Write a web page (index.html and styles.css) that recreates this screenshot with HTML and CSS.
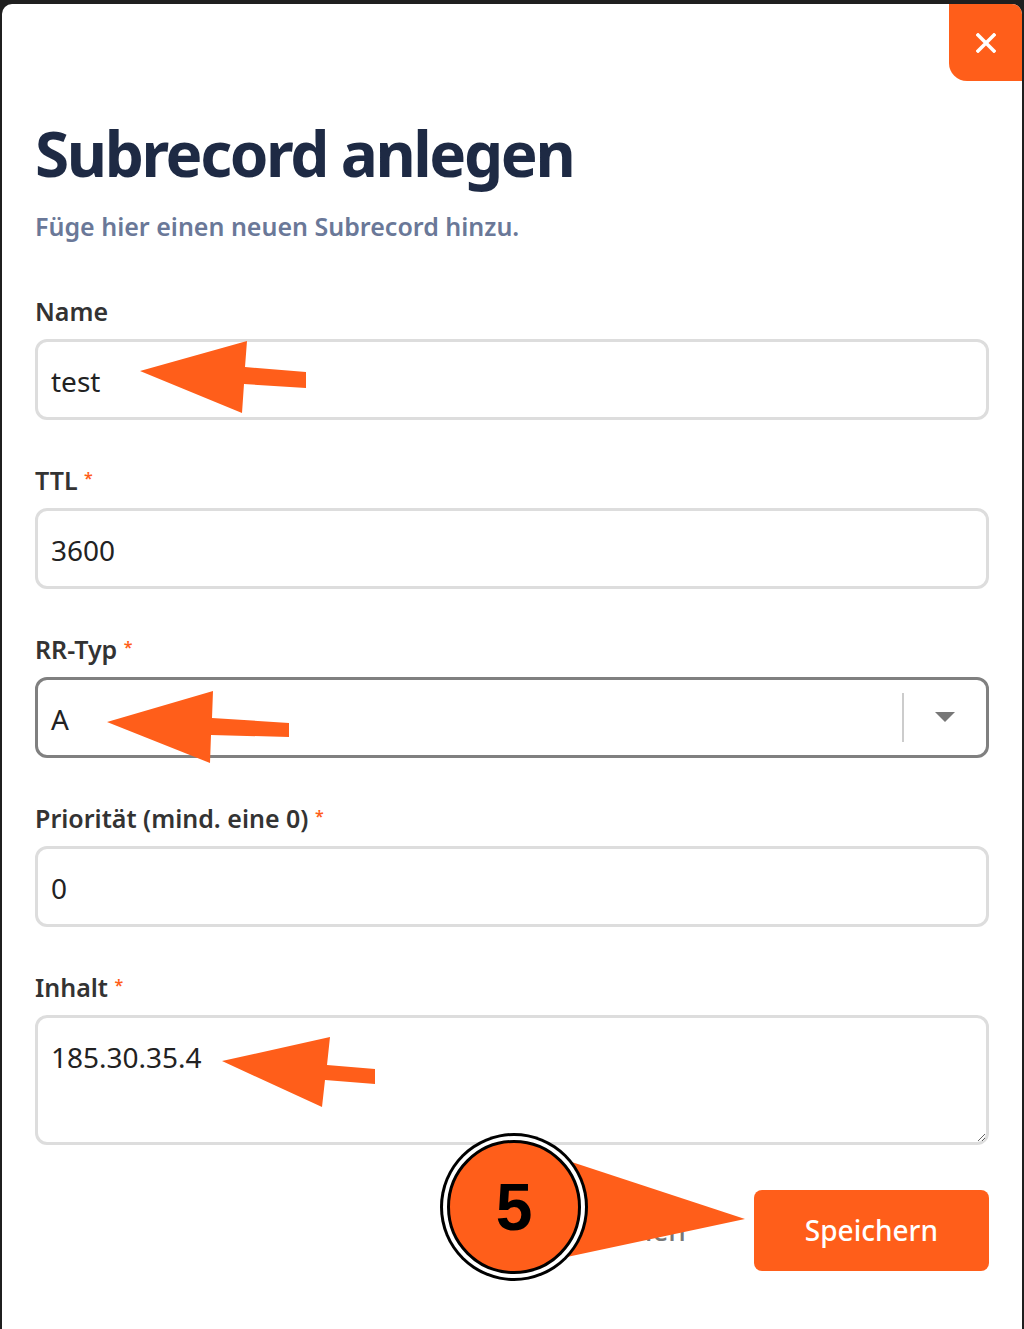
FILE: index.html
```html
<!DOCTYPE html>
<html lang="de">
<head>
    <meta charset="UTF-8">
    <meta name="viewport" content="width=device-width, initial-scale=1.0">
    <title>Subrecord anlegen</title>
    <link rel="stylesheet" href="styles.css">
</head>
<body>
    <div class="modal">
        <button class="close-button" type="button" aria-label="Schließen">
            <svg width="20" height="20" viewBox="0 0 20 20">
                <path d="M2 2 L18 18 M18 2 L2 18" stroke="#fff" stroke-width="3.5" stroke-linecap="square"/>
            </svg>
        </button>

        <h1 class="modal-title">Subrecord anlegen</h1>
        <p class="modal-subtitle">Füge hier einen neuen Subrecord hinzu.</p>

        <form class="record-form">
            <div class="field">
                <label for="name">Name</label>
                <input id="name" type="text" value="test">
            </div>
            <div class="field">
                <label for="ttl">TTL <span class="required">*</span></label>
                <input id="ttl" type="text" value="3600">
            </div>
            <div class="field">
                <label>RR-Typ <span class="required">*</span></label>
                <div class="select-box">
                    <span class="select-value">A</span>
                    <span class="select-divider"></span>
                    <span class="select-indicator"><span class="select-caret"></span></span>
                </div>
            </div>
            <div class="field">
                <label for="prio">Priorität (mind. eine 0) <span class="required">*</span></label>
                <input id="prio" type="text" value="0">
            </div>
            <div class="field">
                <label for="content">Inhalt <span class="required">*</span></label>
                <textarea id="content">185.30.35.4</textarea>
            </div>
            <div class="form-actions">
                <button type="button" class="cancel-button">Abbrechen</button>
                <button type="submit" class="save-button">Speichern</button>
            </div>
        </form>
    </div>

    <!-- Markierungen aus der Anleitung -->
    <svg class="annotations" width="1024" height="1329" viewBox="0 0 1024 1329">
        <polygon points="140,371 247,341 245,367 306,372 306,388 244,384 242,413" />
        <polygon points="107,722 213,691 212,718 289,723 289,737 211,735 210,763" />
        <polygon points="222,1061 330,1037 327,1065 375,1069 375,1084 325,1080 322,1107" />
        <polygon points="520,1145 745,1219 520,1267" />
    </svg>
    <div class="step-badge">5</div>
</body>
</html>
```

FILE: styles.css
```css
body {
    margin: 0;
    background: #1f1f1f;
    font-family: "Noto Sans", sans-serif;
    color: #333;
}

.modal {
    position: relative;
    margin: 4px 2px 0 2px;
    min-height: 1325px;
    box-sizing: border-box;
    padding: 112px 33px 0;
    background: #fff;
    border-radius: 10px 10px 0 0;
}

.close-button {
    position: absolute;
    top: 0;
    right: 0;
    width: 73px;
    height: 77px;
    border: none;
    padding: 0;
    background: #ff5e1a;
    border-radius: 0 10px 0 18px;
    display: flex;
    align-items: center;
    justify-content: center;
    cursor: pointer;
}

.modal-title {
    margin: 0;
    font-size: 62px;
    line-height: 1.2;
    font-weight: 700;
    letter-spacing: -2.4px;
    color: #1e2a44;
}

.modal-subtitle {
    margin: 20px 0 0;
    font-size: 25px;
    line-height: 1.3;
    font-weight: 600;
    color: #6a7898;
}

.record-form {
    margin-top: 53px;
    display: flex;
    flex-direction: column;
    gap: 45px;
}

.field {
    display: flex;
    flex-direction: column;
    gap: 13px;
}

.field label {
    font-size: 25px;
    line-height: 30px;
    font-weight: 600;
    color: #333;
}

.required {
    color: #ff5e1a;
    font-size: 16px;
    vertical-align: top;
    line-height: 26px;
}

.field input,
.field textarea,
.select-box {
    box-sizing: border-box;
    width: 100%;
    border: 3px solid #ddd;
    border-radius: 12px;
    font-family: "Noto Sans", sans-serif;
    font-size: 28px;
    color: #222;
    background: #fff;
}

.field input {
    height: 81px;
    padding: 4px 13px 0;
}

.field textarea {
    height: 130px;
    padding: 20px 13px;
    line-height: 1.4;
    resize: vertical;
}

.select-box {
    height: 81px;
    display: flex;
    align-items: center;
    padding: 4px 0 0 13px;
    border-color: #808080;
}

.select-value {
    flex: 1;
}

.select-divider {
    width: 2px;
    height: 49px;
    margin-top: -4px;
    background: #ccc;
}

.select-indicator {
    width: 82px;
    margin-top: -4px;
    display: flex;
    justify-content: center;
}

.select-caret {
    width: 0;
    height: 0;
    border-left: 10px solid transparent;
    border-right: 10px solid transparent;
    border-top: 10px solid #777;
}

.form-actions {
    display: flex;
    justify-content: flex-end;
    gap: 17px;
}

.form-actions button {
    height: 81px;
    padding: 0 51px;
    border: none;
    border-radius: 8px;
    font-family: "Noto Sans", sans-serif;
    font-size: 28px;
    font-weight: 500;
    cursor: pointer;
}

.cancel-button {
    background: transparent;
    color: #777;
}

.save-button {
    background: #ff5e1a;
    color: #fff;
}

.annotations {
    position: absolute;
    top: 0;
    left: 0;
    pointer-events: none;
    fill: #ff5e1a;
}

.step-badge {
    position: absolute;
    left: 447px;
    top: 1140px;
    width: 128px;
    height: 128px;
    border-radius: 50%;
    background: #ff5e1a;
    border: 3px solid #000;
    box-shadow: 0 0 0 4px #fff, 0 0 0 7px #000;
    display: flex;
    align-items: center;
    justify-content: center;
    font-family: "Liberation Sans", Arial, sans-serif;
    font-size: 66px;
    font-weight: 700;
    color: #000;
}
```
